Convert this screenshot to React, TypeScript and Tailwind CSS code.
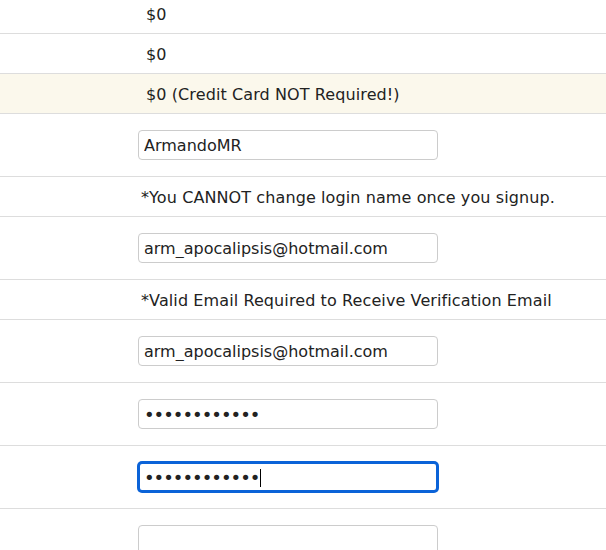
const font = { fontFamily: '"DejaVu Sans", "Liberation Sans", sans-serif' };

const TextRow = ({ text, pad = "pl-[146px]", highlight = false }: { text: string; pad?: string; highlight?: boolean }) => (
  <div className={`flex items-center h-[40px] border-b border-[#dddddd] ${highlight ? "bg-[#fbf8ec]" : ""}`}>
    <span className={`${pad} pt-[3px] text-[16px] tracking-[0.1px] text-[#222222]`}>{text}</span>
  </div>
);

const InputRow = ({ value, type = "text", focused = false }: { value: string; type?: string; focused?: boolean }) => (
  <div className="flex items-center h-[63px] border-b border-[#dddddd] pl-[138px]">
    <div className="relative">
      <input
        readOnly
        type={type}
        defaultValue={value}
        style={font}
        className={`w-[300px] h-[30px] rounded-[4px] bg-white outline-none text-[#222222] ${
          type === "password" ? "text-[18px] tracking-[-1px]" : "text-[16px]"
        } ${focused ? "border-2 border-[#0b63d8] ring-1 ring-[#0b63d8] px-[4px]" : "border border-[#cccccc] px-[5px]"}`}
      />
      {focused && <span className="absolute left-[122px] top-[7px] w-[1px] h-[18px] bg-black" />}
    </div>
  </div>
);

export default function App() {
  return (
    <div className="w-[606px] h-[550px] overflow-hidden bg-white" style={font}>
      <div className="-mt-[6px]">
        <TextRow text="$0" />
        <TextRow text="$0" />
        <TextRow text="$0 (Credit Card NOT Required!)" highlight />
        <InputRow value="ArmandoMR" />
        <TextRow text="*You CANNOT change login name once you signup." pad="pl-[141px]" />
        <InputRow value="arm_apocalipsis@hotmail.com" />
        <TextRow text="*Valid Email Required to Receive Verification Email" pad="pl-[141px]" />
        <InputRow value="arm_apocalipsis@hotmail.com" />
        <InputRow value="ArmandoMR123" type="password" />
        <InputRow value="ArmandoMR123" type="password" focused />
        <InputRow value="" />
      </div>
    </div>
  );
}
